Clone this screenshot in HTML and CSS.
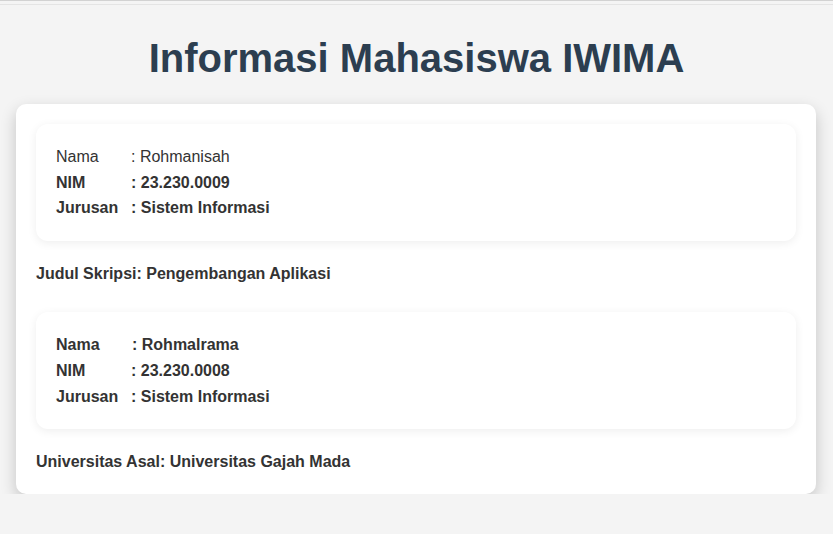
FILE: index.html
```html
<!DOCTYPE html>
<html lang="id">
<head>
<meta charset="utf-8">
<title>Informasi Mahasiswa IWIMA</title>
<link rel="stylesheet" href="styles.css">
</head>
<body>
<div class="topline"></div>
<h1 class="title">Informasi Mahasiswa IWIMA</h1>
<div class="page">
<main class="container">
  <section class="card">
    <div class="row"><span class="label">Nama</span><span class="value">: Rohmanisah</span></div>
    <div class="row bold"><span class="label">NIM</span><span class="value">: 23.230.0009</span></div>
    <div class="row bold"><span class="label">Jurusan</span><span class="value">: Sistem Informasi</span></div>
  </section>
  <p class="extra">Judul Skripsi: Pengembangan Aplikasi</p>
  <section class="card">
    <div class="row bold"><span class="label">Nama</span><span class="value shift">: Rohmalrama</span></div>
    <div class="row bold"><span class="label">NIM</span><span class="value">: 23.230.0008</span></div>
    <div class="row bold"><span class="label">Jurusan</span><span class="value">: Sistem Informasi</span></div>
  </section>
  <p class="extra last">Universitas Asal: Universitas Gajah Mada</p>
</main>
</div>
</body>
</html>
```

FILE: styles.css
```css
html, body {
  margin: 0;
  padding: 0;
}
body {
  background: #f4f4f4;
  font-family: "Liberation Sans", Arial, sans-serif;
  color: #333;
  font-size: 16px;
  line-height: 1.6;
}
.topline {
  height: 3px;
  border-top: 1px solid #d2d2d2;
  border-bottom: 1px solid #e4e4e4;
}
.title {
  margin: 30px 0 23px;
  font-size: 40px;
  line-height: 46px;
  font-weight: bold;
  text-align: center;
  color: #2c3e50;
}
.page {
  padding: 0 17px 0 16px;
}
.container {
  max-width: 800px;
  box-sizing: border-box;
  background: #fff;
  border-radius: 10px;
  padding: 20px 20px 19px;
  box-shadow: 0 6px 16px rgba(0, 0, 0, 0.2);
}
.card {
  background: #fff;
  border-radius: 12px;
  padding: 20px;
  margin-bottom: 20px;
  box-shadow: 0 2px 10px rgba(0, 0, 0, 0.07);
}
.row {
  display: flex;
}
.row.bold {
  font-weight: bold;
}
.label {
  width: 75px;
  flex: none;
}
.value.shift {
  padding-left: 1px;
}
.extra {
  margin: 0 0 26px;
  font-weight: bold;
}
.extra.last {
  margin-bottom: 0;
}
```
